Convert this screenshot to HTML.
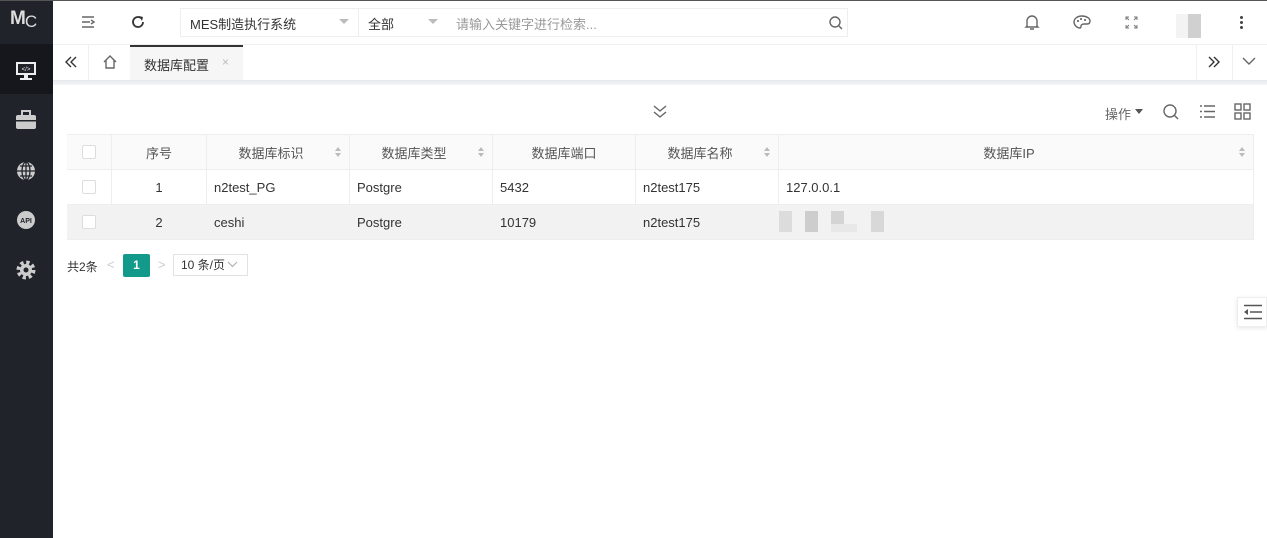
<!DOCTYPE html>
<html><head><meta charset="utf-8"><style>
*{box-sizing:border-box;margin:0;padding:0}
body{width:1267px;height:538px;overflow:hidden;background:#fff;font-family:"Liberation Sans","Noto Sans CJK SC",sans-serif;font-size:13px;color:#333;position:relative}
.abs{position:absolute}
.side{left:0;top:0;width:53px;height:538px;background:#20232a}
.topline{left:0;top:0;width:1267px;height:1px;background:#555}
.ic{stroke:#666;fill:none;stroke-width:1.4}
.th,.td{position:absolute;height:100%;display:flex;align-items:center;border-right:1px solid #eee}
.row{position:absolute;left:67px;width:1186px}
.cb{width:14px;height:14px;border:1px solid #ddd;background:#fff;border-radius:2px}
.sort{position:absolute;right:8px;top:50%;margin-top:-5px;width:6px;height:10px}
.ps{padding-right:14px}
</style></head><body>
<div class="abs side"></div>
<div class="abs" style="left:0;top:44px;width:53px;height:50px;background:#15171c"></div>
<div class="abs" style="left:10px;top:8px;color:#ddd;font-size:19px;font-weight:bold;letter-spacing:-1px">M<span style="font-weight:normal;font-size:17px;position:relative;top:3px">C</span></div>
<svg class="abs" style="left:14px;top:60px" width="24" height="22"><rect x="2" y="2" width="20" height="13" fill="#eee"/><rect x="4" y="4" width="16" height="9" fill="#20232a"/><text x="12" y="11" font-size="6" fill="#eee" text-anchor="middle">&lt;/&gt;</text><rect x="10" y="15" width="4" height="3" fill="#eee"/><rect x="6" y="18" width="12" height="2" fill="#eee"/></svg>
<svg class="abs" style="left:15px;top:110px" width="22" height="20"><rect x="1" y="5" width="20" height="14" rx="2" fill="#ccc"/><rect x="7" y="1" width="8" height="5" fill="none" stroke="#ccc" stroke-width="2"/><rect x="1" y="10" width="20" height="1.5" fill="#20232a"/></svg>
<svg class="abs" style="left:15px;top:160px" width="22" height="22"><circle cx="11" cy="11" r="9" fill="#ccc"/><path d="M2 11h18M11 2v18M5 6h12M5 16h12" stroke="#20232a" stroke-width="1.3"/><ellipse cx="11" cy="11" rx="4" ry="9" fill="none" stroke="#20232a" stroke-width="1.3"/></svg>
<svg class="abs" style="left:15px;top:209px" width="22" height="22"><circle cx="11" cy="11" r="9" fill="#ccc"/><text x="11" y="14" font-size="7" font-weight="bold" fill="#20232a" text-anchor="middle">API</text></svg>
<svg class="abs" style="left:15px;top:259px" width="22" height="22"><circle cx="11" cy="11" r="7" fill="none" stroke="#ccc" stroke-width="5" stroke-dasharray="3 2.5"/><circle cx="11" cy="11" r="6" fill="#ccc"/><circle cx="11" cy="11" r="2.5" fill="#20232a"/></svg>
<div class="abs topline"></div>
<svg class="abs" style="left:80px;top:14px" width="16" height="16"><path d="M2 3h12M2 8h8M2 13h12M11 6l3 2-3 2" class="ic" stroke="#444"/></svg>
<svg class="abs" style="left:130px;top:14px" width="16" height="16"><path d="M13 8a5 5 0 1 1-2-4" stroke="#333" stroke-width="1.8" fill="none"/><path d="M9 2l4 1-1 4z" fill="#333"/></svg>
<div class="abs" style="left:180px;top:8px;width:668px;height:29px;border:1px solid #eee"></div>
<div class="abs" style="left:358px;top:9px;width:1px;height:27px;background:#eee"></div>
<div class="abs" style="left:190px;top:14px;font-size:13px;color:#333">MES制造执行系统</div>
<div class="abs" style="left:339px;top:19px;border:5px solid transparent;border-top:5px solid #bbb"></div>
<div class="abs" style="left:368px;top:14px;color:#333">全部</div>
<div class="abs" style="left:428px;top:19px;border:5px solid transparent;border-top:5px solid #bbb"></div>
<div class="abs" style="left:456px;top:14px;color:#999">请输入关键字进行检索...</div>
<svg class="abs" style="left:828px;top:15px" width="16" height="16"><circle cx="7" cy="7" r="5" class="ic"/><path d="M11 11l3 3" class="ic" stroke-width="2"/></svg>
<svg class="abs" style="left:1024px;top:14px" width="16" height="17"><path d="M3 12V7a5 5 0 0 1 10 0v5l1 1H2z M6 15h4" class="ic" stroke="#555"/></svg>
<svg class="abs" style="left:1073px;top:15px" width="18" height="14"><path d="M9 1C4 1 1 4 1 7s3 6 6 6c1 0 1-1 1-2s1-2 3-2h3c2 0 3-1 3-3 0-3-4-5-8-5z" class="ic" stroke="#555"/><circle cx="5" cy="6" r="1" fill="#555"/><circle cx="8" cy="4" r="1" fill="#555"/><circle cx="12" cy="5" r="1" fill="#555"/></svg>
<svg class="abs" style="left:1125px;top:16px" width="13" height="13"><path d="M1 4V1h3M9 1h3v3M12 9v3H9M4 12H1V9M1 1l3 3M12 1L9 4M12 12L9 9M1 12l3-3" stroke="#777" fill="none" stroke-width="1"/></svg>
<div class="abs" style="left:1176px;top:14px;width:25px;height:24px;background:#f3f3f3"></div>
<div class="abs" style="left:1188px;top:14px;width:13px;height:24px;background:#d0d0d0"></div>
<div class="abs" style="left:1240px;top:16px;width:3px;height:3px;background:#444;border-radius:2px;box-shadow:0 5px 0 #444,0 10px 0 #444"></div>
<div class="abs" style="left:53px;top:44px;width:1214px;height:1px;background:#f0f0f0"></div>
<div class="abs" style="left:53px;top:80px;width:1214px;height:5px;background:linear-gradient(#e6e8ec,#f4f5f7)"></div>
<div class="abs" style="left:88px;top:45px;width:1px;height:35px;background:#f0f0f0"></div>
<svg class="abs" style="left:64px;top:55px" width="14" height="14"><path d="M7 2L2 7l5 5M12 2L7 7l5 5" stroke="#333" stroke-width="1.4" fill="none"/></svg>
<svg class="abs" style="left:102px;top:54px" width="16" height="15"><path d="M2 8L8 2l6 6M4 6v8h8V6" class="ic" stroke="#777" stroke-width="1.1"/></svg>
<div class="abs" style="left:130px;top:45px;width:113px;height:35px;background:#f6f6f6;border-top:2px solid #333"></div>
<div class="abs" style="left:144px;top:55px;color:#333">数据库配置</div>
<div class="abs" style="left:222px;top:55px;color:#bbb;font-size:12px">×</div>
<div class="abs" style="left:1196px;top:45px;width:1px;height:35px;background:#f0f0f0"></div>
<div class="abs" style="left:1232px;top:45px;width:1px;height:35px;background:#f0f0f0"></div>
<svg class="abs" style="left:1207px;top:55px" width="14" height="14"><path d="M2 2l5 5-5 5M7 2l5 5-5 5" stroke="#333" stroke-width="1.4" fill="none"/></svg>
<svg class="abs" style="left:1242px;top:56px" width="14" height="10"><path d="M1 2l6 6 6-6" class="ic" stroke="#555"/></svg>
<svg class="abs" style="left:652px;top:103px" width="16" height="16"><path d="M2 3l6 5 6-5M2 9l6 5 6-5" class="ic" stroke="#777"/></svg>
<div class="abs" style="left:1105px;top:104px;color:#666">操作</div>
<div class="abs" style="left:1135px;top:109px;border:4px solid transparent;border-top:5px solid #555"></div>
<svg class="abs" style="left:1162px;top:103px" width="18" height="18"><circle cx="8" cy="8" r="6" class="ic" stroke="#777" stroke-width="1.5"/><path d="M12 12l4 4" class="ic" stroke="#777" stroke-width="1.5"/></svg>
<svg class="abs" style="left:1199px;top:104px" width="17" height="15"><path d="M1 2h2M1 7.5h2M1 13h2M5 2h11M5 7.5h11M5 13h11" class="ic" stroke="#777"/></svg>
<svg class="abs" style="left:1234px;top:103px" width="17" height="17"><rect x="1" y="1" width="6" height="6" class="ic" stroke="#777"/><rect x="10" y="1" width="6" height="6" class="ic" stroke="#777"/><rect x="1" y="10" width="6" height="6" class="ic" stroke="#777"/><rect x="10" y="10" width="6" height="6" class="ic" stroke="#777"/></svg>
<div class="abs" style="left:67px;top:134px;width:1187px;height:106px;border:1px solid #eee"></div>
<div class="row" style="top:135px;height:35px;background:#fafafa;border-bottom:1px solid #eee;color:#555">
<div class="th" style="left:0;width:45px;justify-content:center"><div class="cb"></div></div>
<div class="th" style="left:45px;width:95px;justify-content:center">序号</div>
<div class="th ps" style="left:140px;width:143px;justify-content:center">数据库标识<svg class="sort" viewBox="0 0 6 10"><path d="M0 4l3-4 3 4zM0 6l3 4 3-4z" fill="#bbb"/></svg></div>
<div class="th ps" style="left:283px;width:143px;justify-content:center">数据库类型<svg class="sort" viewBox="0 0 6 10"><path d="M0 4l3-4 3 4zM0 6l3 4 3-4z" fill="#bbb"/></svg></div>
<div class="th" style="left:426px;width:143px;justify-content:center">数据库端口</div>
<div class="th ps" style="left:569px;width:143px;justify-content:center">数据库名称<svg class="sort" viewBox="0 0 6 10"><path d="M0 4l3-4 3 4zM0 6l3 4 3-4z" fill="#bbb"/></svg></div>
<div class="th ps" style="left:712px;width:474px;justify-content:center;border-right:0">数据库IP<svg class="sort" viewBox="0 0 6 10"><path d="M0 4l3-4 3 4zM0 6l3 4 3-4z" fill="#bbb"/></svg></div>
</div>
<div class="row" style="top:170px;height:35px;background:#fff;border-bottom:1px solid #eee">
<div class="td" style="left:0;width:45px;justify-content:center"><div class="cb"></div></div>
<div class="td" style="left:45px;width:95px;justify-content:center">1</div>
<div class="td" style="left:140px;width:143px;padding-left:7px">n2test_PG</div>
<div class="td" style="left:283px;width:143px;padding-left:7px">Postgre</div>
<div class="td" style="left:426px;width:143px;padding-left:7px">5432</div>
<div class="td" style="left:569px;width:143px;padding-left:7px">n2test175</div>
<div class="td" style="left:712px;width:474px;padding-left:7px;border-right:0">127.0.0.1</div>
</div>
<div class="row" style="top:205px;height:34px;background:#f2f2f2">
<div class="td" style="left:0;width:45px;justify-content:center;border-color:#f2f2f2"><div class="cb"></div></div>
<div class="td" style="left:45px;width:95px;justify-content:center;border-color:#f2f2f2">2</div>
<div class="td" style="left:140px;width:143px;padding-left:7px;border-color:#f2f2f2">ceshi</div>
<div class="td" style="left:283px;width:143px;padding-left:7px;border-color:#f2f2f2">Postgre</div>
<div class="td" style="left:426px;width:143px;padding-left:7px;border-color:#f2f2f2">10179</div>
<div class="td" style="left:569px;width:143px;padding-left:7px;border-color:#f2f2f2">n2test175</div>
</div>
<div class="abs" style="left:779px;top:211px;width:13px;height:21px;background:#dcdcdc"></div>
<div class="abs" style="left:805px;top:211px;width:13px;height:21px;background:#cdcdcd"></div>
<div class="abs" style="left:831px;top:211px;width:13px;height:13px;background:#d4d4d4"></div>
<div class="abs" style="left:831px;top:224px;width:26px;height:8px;background:#e8e8e8"></div>
<div class="abs" style="left:871px;top:211px;width:13px;height:21px;background:#d8d8d8"></div>
<div class="abs" style="left:67px;top:258px;font-size:12px;color:#333">共2条</div>
<div class="abs" style="left:107px;top:257px;color:#ccc">&lt;</div>
<div class="abs" style="left:123px;top:254px;width:27px;height:23px;background:#139a8a;border-radius:2px;color:#fff;font-weight:bold;font-size:12px;text-align:center;line-height:23px">1</div>
<div class="abs" style="left:158px;top:257px;color:#ccc">&gt;</div>
<div class="abs" style="left:173px;top:254px;width:75px;height:22px;border:1px solid #e2e2e2;font-size:12px;line-height:20px;padding-left:7px;color:#333">10 条/页</div>
<svg class="abs" style="left:227px;top:261px" width="11" height="7"><path d="M1 1l4.5 4.5L10 1" stroke="#aaa" fill="none"/></svg>
<div class="abs" style="left:1237px;top:297px;width:30px;height:30px;background:#fff;border:1px solid #eee;box-shadow:0 1px 4px rgba(0,0,0,.1)"></div>
<svg class="abs" style="left:1243px;top:304px" width="20" height="16"><path d="M1 1.5h18M7 8h12M1 14.5h18" stroke="#555" stroke-width="1.5"/><path d="M1 8l4-3v6z" fill="#555"/></svg>
</body></html>
